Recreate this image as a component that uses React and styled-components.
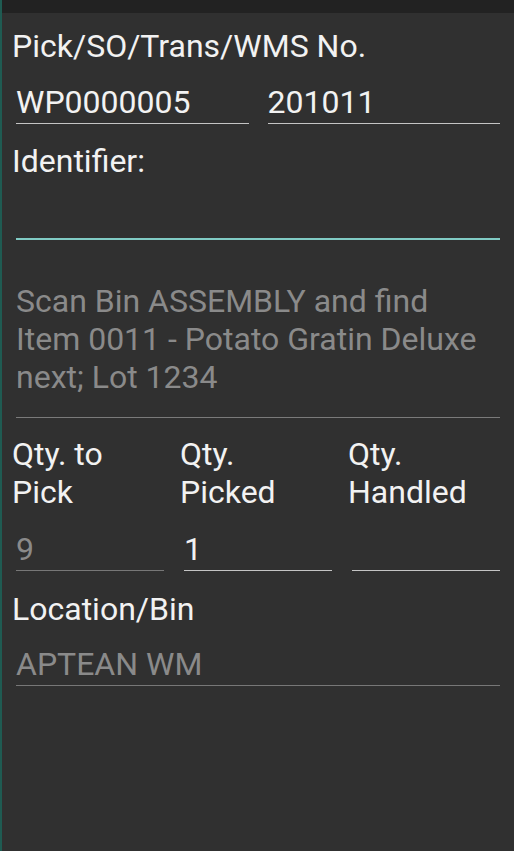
import styled, { createGlobalStyle } from 'styled-components'

const GlobalStyle = createGlobalStyle`
    * {
        box-sizing: border-box;
        margin: 0;
        padding: 0;
    }
    body {
        background: #303030;
        font-family: Roboto, "Liberation Sans", sans-serif;
    }
`

const Screen = styled.div`
    min-height: 851px;
    background: #303030;
    border-left: 2px solid #1f5b52;
    display: flex;
    flex-direction: column;
`

const StatusBar = styled.div`
    height: 13px;
    background: #222222;
`

const Form = styled.div`
    display: flex;
    flex-direction: column;
    padding: 12px 14px 0 10px;
`

const Label = styled.div`
    color: #f2f2f2;
    font-size: 32px;
    line-height: 38px;
    padding-top: 2px;
    margin-top: ${props => props.top || '16px'};
`

const Row = styled.div`
    display: grid;
    grid-template-columns: repeat(${props => props.cols}, 1fr);
    column-gap: ${props => props.gap || '0'};
    margin: ${props => props.top || '16px'} ${props => props.right || '0'} 0 ${props => props.left || '4px'};
`

const Field = styled.div`
    height: ${props => props.focused ? '44px' : '43px'};
    padding: 2px 0;
    font-size: 32px;
    line-height: 38px;
    color: ${props => props.disabled ? '#8a8a8a' : '#f2f2f2'};
    border-bottom: ${props => props.focused ? '2px solid #80cbc4' : props.disabled ? '1px solid #777777' : '1px solid #c4c4c4'};
    white-space: nowrap;
`

const Instruction = styled.div`
    margin: 40px 0 0 4px;
    padding: 2px 0 21px 0;
    font-size: 32px;
    line-height: 38px;
    color: #8a8a8a;
    border-bottom: 1px solid #7a7a7a;
`

const QtyLabel = styled.div`
    color: #f2f2f2;
    font-size: 32px;
    line-height: 38px;
    padding-top: 2px;
`

export default function App() {
    const qty = [
        { label: ['Qty. to', 'Pick'], value: '9', disabled: true },
        { label: ['Qty.', 'Picked'], value: '1' },
        { label: ['Qty.', 'Handled'], value: '' },
    ]

    return (
        <Screen>
            <GlobalStyle />
            <StatusBar />
            <Form>
                <Label top="0">Pick/SO/Trans/WMS No.</Label>
                <Row cols={2} gap="19px">
                    <Field>WP0000005</Field>
                    <Field>201011</Field>
                </Row>

                <Label>Identifier:</Label>
                <Row cols={1}>
                    <Field focused></Field>
                </Row>

                <Instruction>
                    Scan Bin ASSEMBLY and find<br />
                    Item 0011 - Potato Gratin Deluxe<br />
                    next; Lot 1234
                </Instruction>

                <Row cols={3} gap="20px" top="15px" left="0" right="4px">
                    {qty.map((q, i) => (
                        <QtyLabel key={i}>{q.label[0]}<br />{q.label[1]}</QtyLabel>
                    ))}
                </Row>
                <Row cols={3} gap="20px" top="17px">
                    {qty.map((q, i) => (
                        <Field key={i} disabled={q.disabled}>{q.value}</Field>
                    ))}
                </Row>

                <Label top="17px">Location/Bin</Label>
                <Row cols={1} top="15px">
                    <Field disabled>APTEAN WM</Field>
                </Row>
            </Form>
        </Screen>
    )
}
